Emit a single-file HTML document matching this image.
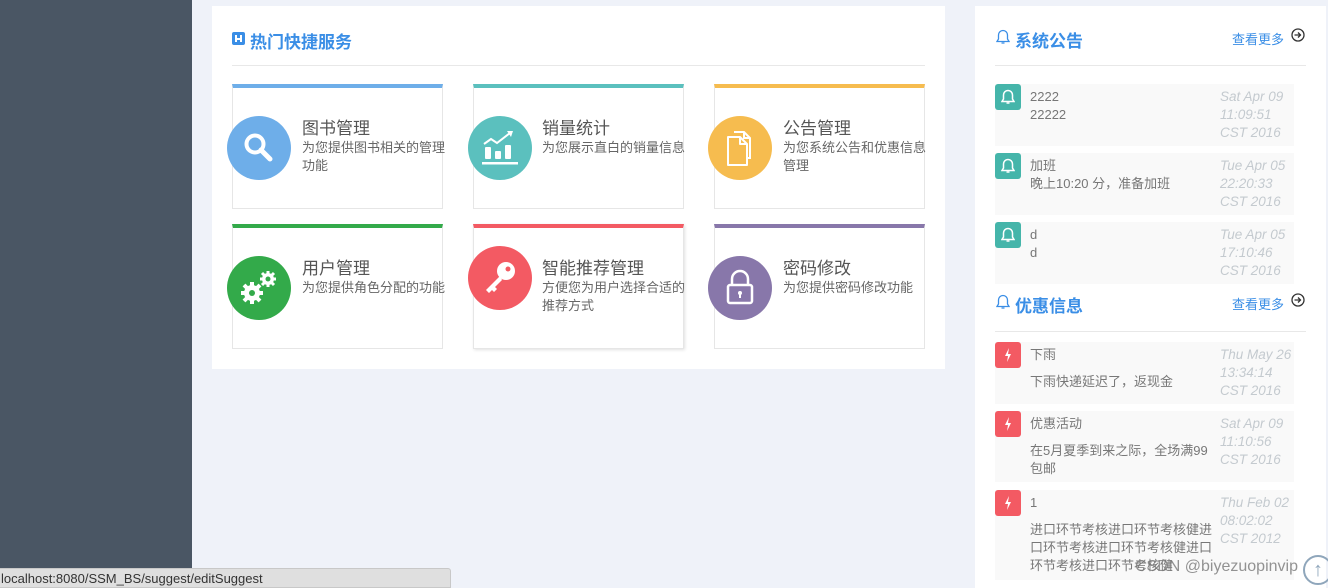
<!DOCTYPE html>
<html><head><meta charset="utf-8">
<style>
*{margin:0;padding:0;box-sizing:border-box}
body{width:1328px;height:588px;overflow:hidden;background:#eff2f9;font-family:"Liberation Sans","Noto Sans CJK SC",sans-serif;position:relative}
.abs{position:absolute}
.side{left:0;top:0;width:192px;height:588px;background:#4a5664}
.main{left:212px;top:6px;width:733px;height:363px;background:#fff}
.h{color:#3a8ee6;font-size:17px;font-weight:bold;white-space:nowrap}
.hr{height:1px;background:#e8e8e8}
.card{width:211px;height:125px;border:1px solid #e6e6e6;border-top:4px solid;background:#fff}
.circ{width:64px;height:64px;border-radius:50%;display:flex;align-items:center;justify-content:center}
.ct{font-size:17px;color:#555;white-space:nowrap}
.cd{font-size:13px;color:#666;line-height:18px;width:145px}
.right{left:975px;top:6px;width:351px;height:582px;background:#fff}
.item{left:995px;width:299px;background:#f9f9f9}
.ic{left:995px;width:26px;height:26px;border-radius:3px;display:flex;align-items:center;justify-content:center}
.it{font-size:13px;color:#777;line-height:18px;width:185px}
.dt{font-size:13.5px;color:#c4cacf;font-style:italic;line-height:18px;width:72px}
.more{font-size:13px;color:#3a8ee6}
</style></head><body>
<div class="abs side"></div>
<div class="abs main"></div>
<div class="abs" style="left:232px;top:32px;width:13px;height:13px;background:#3a8ee6;border-radius:2px"><div style="position:absolute;left:3px;top:3px;width:7px;height:7px;border-left:2px solid #fff;border-right:2px solid #fff"></div><div style="position:absolute;left:3px;top:6px;width:7px;height:2px;background:#fff"></div></div>
<div class="abs h" style="left:250px;top:28px">热门快捷服务</div>
<div class="abs hr" style="left:232px;top:65px;width:693px"></div>

<div class="abs card" style="left:232px;top:84px;border-top-color:#6eaee9"></div>
<div class="abs card" style="left:473px;top:84px;border-top-color:#5bc0be"></div>
<div class="abs card" style="left:714px;top:84px;border-top-color:#f6bc4f"></div>
<div class="abs card" style="left:232px;top:224px;border-top-color:#33aa4a"></div>
<div class="abs card" style="left:473px;top:224px;border-top-color:#f35a63;box-shadow:1px 1px 3px rgba(0,0,0,.12)"></div>
<div class="abs card" style="left:714px;top:224px;border-top-color:#8877aa"></div>

<div class="abs circ" style="left:227px;top:116px;background:#6eaee9"><svg width="36" height="36" viewBox="0 0 36 36"><circle cx="14" cy="14" r="8.5" fill="none" stroke="#fff" stroke-width="4"/><line x1="20" y1="20" x2="29" y2="29" stroke="#fff" stroke-width="5" stroke-linecap="round"/></svg></div>
<div class="abs circ" style="left:468px;top:116px;background:#5bc0be"><svg width="40" height="40" viewBox="0 0 40 40"><polyline points="4,16 11,11 17,15 30,5" fill="none" stroke="#fff" stroke-width="2"/><polygon points="27,3 33,3 31,9" fill="#fff"/><rect x="5" y="19" width="6" height="12" rx="1" fill="#fff"/><rect x="15" y="23" width="6" height="8" rx="1" fill="#fff"/><rect x="25" y="17" width="6" height="14" rx="1" fill="#fff"/><rect x="2" y="34" width="36" height="2.5" fill="#fff"/></svg></div>
<div class="abs circ" style="left:708px;top:116px;background:#f6bc4f"><svg width="36" height="40" viewBox="0 0 36 40"><path d="M12 4h10l6 6v20h-2M22 4v6h6" fill="none" stroke="#fff" stroke-width="2"/><path d="M6 9h12l7 7v21H6z M18 9v7h7" fill="#f6bc4f" stroke="#fff" stroke-width="2" stroke-linejoin="round"/></svg></div>
<div class="abs circ" style="left:227px;top:256px;background:#33aa4a"><svg width="44" height="40" viewBox="0 0 44 40"><g fill="#fff"><circle cx="15" cy="25" r="8"/><g stroke="#fff" stroke-width="4"><line x1="15" y1="14" x2="15" y2="36"/><line x1="4" y1="25" x2="26" y2="25"/><line x1="7" y1="17" x2="23" y2="33"/><line x1="7" y1="33" x2="23" y2="17"/></g><circle cx="31" cy="11" r="6"/><g stroke="#fff" stroke-width="3"><line x1="31" y1="3" x2="31" y2="19"/><line x1="23" y1="11" x2="39" y2="11"/><line x1="25" y1="5" x2="37" y2="17"/><line x1="25" y1="17" x2="37" y2="5"/></g></g><circle cx="15" cy="25" r="3" fill="#33aa4a"/><circle cx="31" cy="11" r="2.5" fill="#33aa4a"/></svg></div>
<div class="abs circ" style="left:468px;top:246px;background:#f35a63"><svg width="40" height="40" viewBox="0 0 40 40"><circle cx="26" cy="13" r="9" fill="#fff"/><circle cx="28" cy="11" r="2.5" fill="#f35a63"/><path d="M20 18L6 32l3 3 3-3 2 2 3-3-2-2 7-7z" fill="#fff"/></svg></div>
<div class="abs circ" style="left:708px;top:256px;background:#8877aa"><svg width="36" height="40" viewBox="0 0 36 40"><path d="M10 17v-6a8 8 0 0 1 16 0v6" fill="none" stroke="#fff" stroke-width="2.5"/><rect x="6" y="17" width="24" height="18" rx="2" fill="none" stroke="#fff" stroke-width="2.5"/><circle cx="18" cy="25" r="2" fill="#fff"/><rect x="17" y="25" width="2" height="5" fill="#fff"/></svg></div>

<div class="abs ct" style="left:302px;top:114px">图书管理</div>
<div class="abs cd" style="left:302px;top:139px">为您提供图书相关的管理功能</div>
<div class="abs ct" style="left:542px;top:114px">销量统计</div>
<div class="abs cd" style="left:542px;top:139px;width:150px">为您展示直白的销量信息</div>
<div class="abs ct" style="left:783px;top:114px">公告管理</div>
<div class="abs cd" style="left:783px;top:139px">为您系统公告和优惠信息管理</div>
<div class="abs ct" style="left:302px;top:254px">用户管理</div>
<div class="abs cd" style="left:302px;top:279px;width:150px">为您提供角色分配的功能</div>
<div class="abs ct" style="left:542px;top:254px">智能推荐管理</div>
<div class="abs cd" style="left:542px;top:279px">方便您为用户选择合适的推荐方式</div>
<div class="abs ct" style="left:783px;top:254px">密码修改</div>
<div class="abs cd" style="left:783px;top:279px;width:150px">为您提供密码修改功能</div>

<div class="abs right"></div>
<svg class="abs" style="left:996px;top:29px" width="14" height="16" viewBox="0 0 14 16"><path d="M7 1.5a4.5 4.5 0 0 1 4.5 4.5v4l1.5 2.5H1l1.5-2.5V6A4.5 4.5 0 0 1 7 1.5z" fill="none" stroke="#3a8ee6" stroke-width="1.3"/><path d="M5.5 14h3" stroke="#3a8ee6" stroke-width="1.3"/></svg>
<div class="abs h" style="left:1015px;top:27px">系统公告</div>
<div class="abs more" style="left:1232px;top:29px">查看更多</div>
<svg class="abs" style="left:1291px;top:28px" width="14" height="14" viewBox="0 0 14 14"><circle cx="7" cy="7" r="6" fill="none" stroke="#333" stroke-width="1.3"/><path d="M3.5 7h6M7 4.5L9.5 7 7 9.5" fill="none" stroke="#333" stroke-width="1.3"/></svg>
<div class="abs hr" style="left:995px;top:65px;width:311px"></div>

<div class="abs item" style="top:84px;height:62px"></div>
<div class="abs item" style="top:153px;height:62px"></div>
<div class="abs item" style="top:222px;height:62px"></div>
<div class="abs ic" style="top:84px;background:#45b5aa"><svg width="14" height="16" viewBox="0 0 14 16"><path d="M7 1.5a4.5 4.5 0 0 1 4.5 4.5v4l1.5 2.5H1l1.5-2.5V6A4.5 4.5 0 0 1 7 1.5z" fill="none" stroke="#fff" stroke-width="1.5"/><path d="M5.5 14h3" stroke="#fff" stroke-width="1.5"/></svg></div>
<div class="abs ic" style="top:153px;background:#45b5aa"><svg width="14" height="16" viewBox="0 0 14 16"><path d="M7 1.5a4.5 4.5 0 0 1 4.5 4.5v4l1.5 2.5H1l1.5-2.5V6A4.5 4.5 0 0 1 7 1.5z" fill="none" stroke="#fff" stroke-width="1.5"/><path d="M5.5 14h3" stroke="#fff" stroke-width="1.5"/></svg></div>
<div class="abs ic" style="top:222px;background:#45b5aa"><svg width="14" height="16" viewBox="0 0 14 16"><path d="M7 1.5a4.5 4.5 0 0 1 4.5 4.5v4l1.5 2.5H1l1.5-2.5V6A4.5 4.5 0 0 1 7 1.5z" fill="none" stroke="#fff" stroke-width="1.5"/><path d="M5.5 14h3" stroke="#fff" stroke-width="1.5"/></svg></div>
<div class="abs it" style="left:1030px;top:88px">2222<br>22222</div>
<div class="abs dt" style="left:1220px;top:88px">Sat Apr 09 11:09:51 CST 2016</div>
<div class="abs it" style="left:1030px;top:157px">加班<br>晚上10:20 分，准备加班</div>
<div class="abs dt" style="left:1220px;top:157px">Tue Apr 05 22:20:33 CST 2016</div>
<div class="abs it" style="left:1030px;top:226px">d<br>d</div>
<div class="abs dt" style="left:1220px;top:226px">Tue Apr 05 17:10:46 CST 2016</div>

<svg class="abs" style="left:996px;top:294px" width="14" height="16" viewBox="0 0 14 16"><path d="M7 1.5a4.5 4.5 0 0 1 4.5 4.5v4l1.5 2.5H1l1.5-2.5V6A4.5 4.5 0 0 1 7 1.5z" fill="none" stroke="#3a8ee6" stroke-width="1.3"/><path d="M5.5 14h3" stroke="#3a8ee6" stroke-width="1.3"/></svg>
<div class="abs h" style="left:1015px;top:292px">优惠信息</div>
<div class="abs more" style="left:1232px;top:294px">查看更多</div>
<svg class="abs" style="left:1291px;top:293px" width="14" height="14" viewBox="0 0 14 14"><circle cx="7" cy="7" r="6" fill="none" stroke="#333" stroke-width="1.3"/><path d="M3.5 7h6M7 4.5L9.5 7 7 9.5" fill="none" stroke="#333" stroke-width="1.3"/></svg>
<div class="abs hr" style="left:995px;top:331px;width:311px"></div>

<div class="abs item" style="top:342px;height:62px"></div>
<div class="abs item" style="top:411px;height:71px"></div>
<div class="abs item" style="top:490px;height:90px"></div>
<div class="abs ic" style="top:342px;background:#f35a63"><svg width="10" height="16" viewBox="0 0 10 16"><path d="M6 1L2 9h3l-1 6 4-8H5z" fill="#fff"/></svg></div>
<div class="abs ic" style="top:411px;background:#f35a63"><svg width="10" height="16" viewBox="0 0 10 16"><path d="M6 1L2 9h3l-1 6 4-8H5z" fill="#fff"/></svg></div>
<div class="abs ic" style="top:490px;background:#f35a63"><svg width="10" height="16" viewBox="0 0 10 16"><path d="M6 1L2 9h3l-1 6 4-8H5z" fill="#fff"/></svg></div>
<div class="abs it" style="left:1030px;top:346px">下雨</div>
<div class="abs it" style="left:1030px;top:373px">下雨快递延迟了，返现金</div>
<div class="abs dt" style="left:1220px;top:346px">Thu May 26 13:34:14 CST 2016</div>
<div class="abs it" style="left:1030px;top:415px">优惠活动</div>
<div class="abs it" style="left:1030px;top:442px">在5月夏季到来之际，全场满99包邮</div>
<div class="abs dt" style="left:1220px;top:415px">Sat Apr 09 11:10:56 CST 2016</div>
<div class="abs it" style="left:1030px;top:494px">1</div>
<div class="abs it" style="left:1030px;top:521px">进口环节考核进口环节考核健进口环节考核进口环节考核健进口环节考核进口环节考核健</div>
<div class="abs dt" style="left:1220px;top:494px">Thu Feb 02 08:02:02 CST 2012</div>

<div class="abs" style="left:1135px;top:558px;font-size:16px;color:rgba(120,120,120,.8);white-space:nowrap">CSDN @biyezuopinvip</div>
<div class="abs" style="left:1303px;top:555px;width:30px;height:30px;border:2px solid #8fa6bb;border-radius:50%;color:#8fa6bb;font-size:20px;text-align:center;line-height:26px">↑</div>

<div class="abs" style="left:0;top:568px;width:451px;height:20px;background:#dfdfdf;border:1px solid #c8c8c8;border-left:none;border-radius:0 3px 0 0;font-size:13px;color:#333;line-height:19px;padding-left:1px">localhost:8080/SSM_BS/suggest/editSuggest</div>
</body></html>
